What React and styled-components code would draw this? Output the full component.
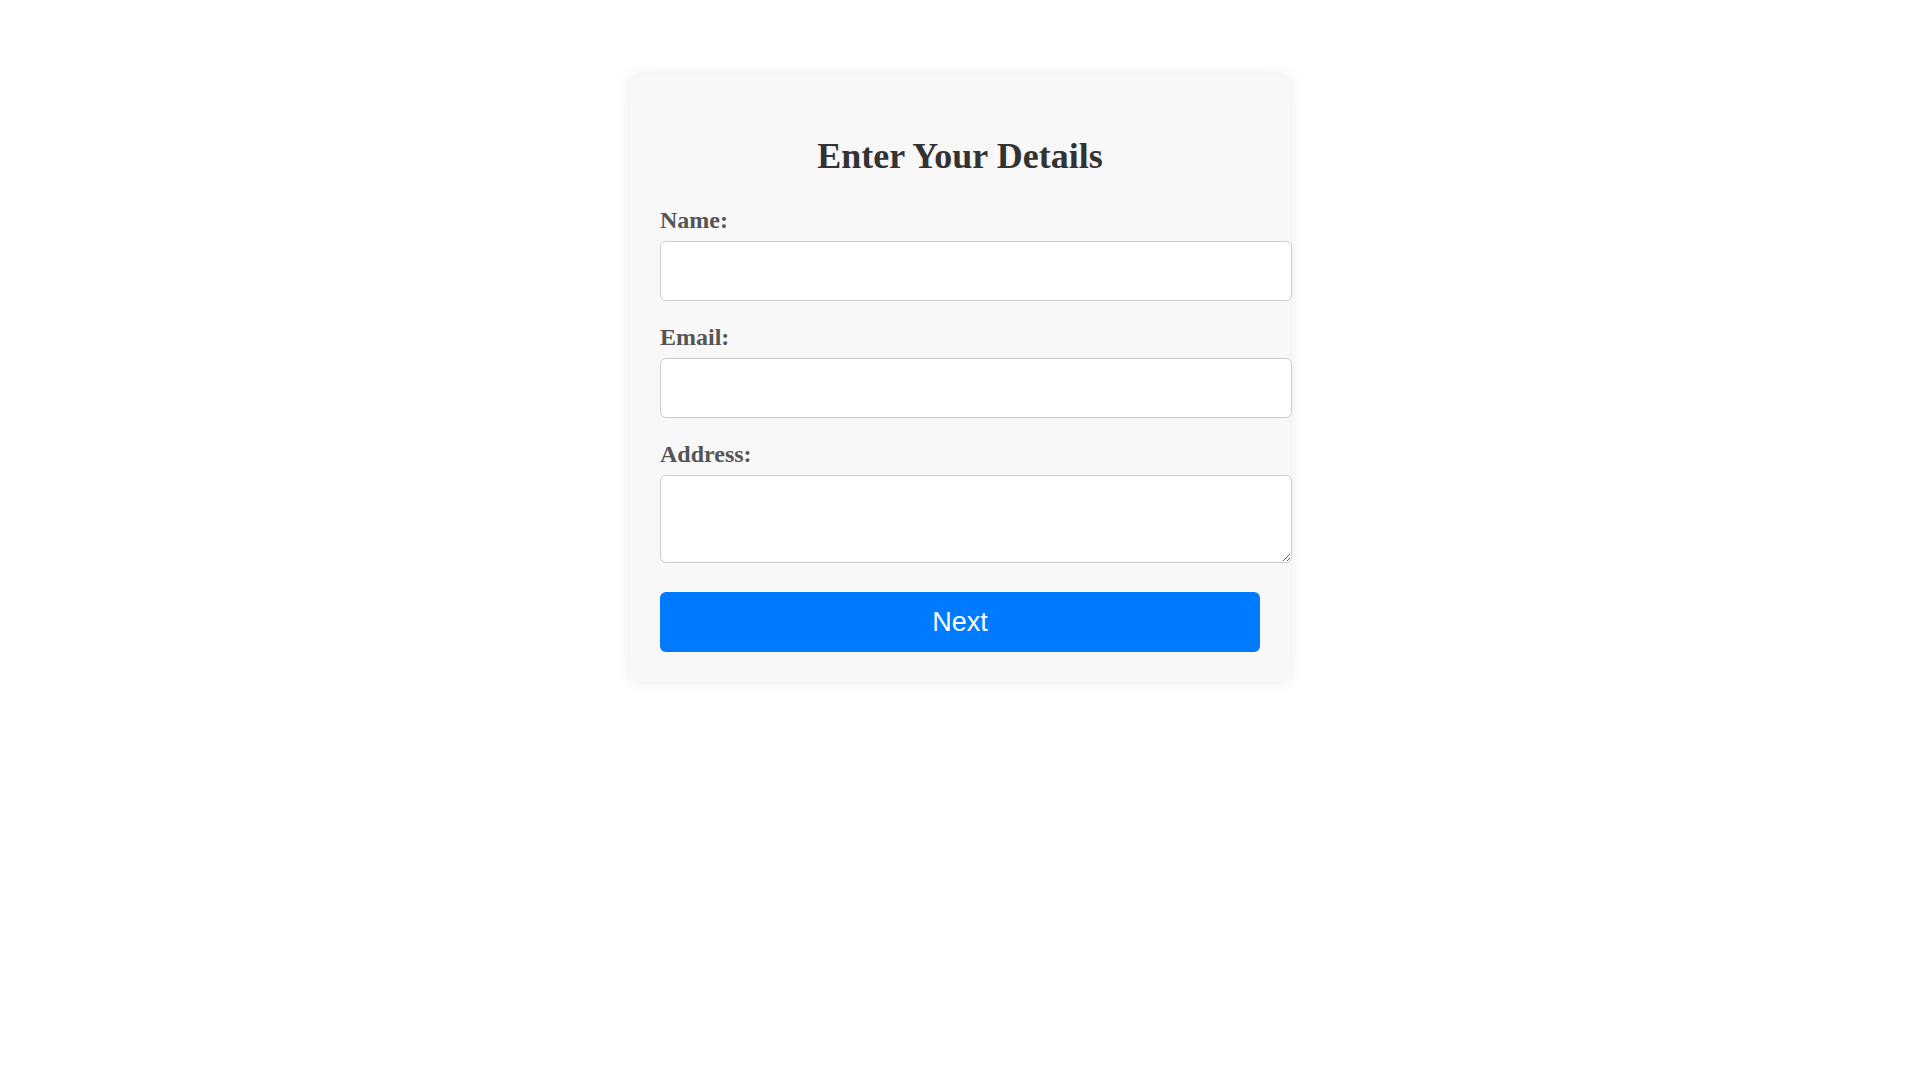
import React from 'react';
import styled, { createGlobalStyle } from 'styled-components';

const GlobalStyle = createGlobalStyle`
    body {
        margin: 0;
        background: #ffffff;
        font-family: "Liberation Serif", "Times New Roman", serif;
    }
`

const Page = styled.div`
    display: flex;
    justify-content: center;
    padding-top: 76px;
    min-height: 1080px;
    box-sizing: border-box;
`

const Card = styled.form`
    width: 600px;
    padding: 30px;
    background-color: #f8f8f8;
    border-radius: 10px;
    box-shadow: 0 0 15px rgba(0, 0, 0, 0.1);
    align-self: flex-start;
`

const Title = styled.h2`
    margin: 30px 0 29px;
    font-size: 36px;
    line-height: 41px;
    font-weight: bold;
    text-align: center;
    color: #333333;
`

const Label = styled.label`
    display: block;
    margin-bottom: 7px;
    font-size: 24px;
    line-height: 28px;
    font-weight: bold;
    color: #555555;
`

const Input = styled.input`
    display: block;
    width: 100%;
    height: 28px;
    padding: 15px;
    margin: 0 0 22px;
    border: 1px solid #cccccc;
    border-radius: 6px;
    background: #ffffff;
    font-size: 24px;
    font-family: "Liberation Serif", serif;
    outline: none;
`

const TextArea = styled.textarea`
    display: block;
    width: 100%;
    height: 56px;
    padding: 15px;
    margin: 0 0 29px;
    border: 1px solid #cccccc;
    border-radius: 6px;
    background: #ffffff;
    font-size: 24px;
    font-family: "Liberation Serif", serif;
    outline: none;
`

const Button = styled.button`
    display: block;
    width: 100%;
    height: 60px;
    border: none;
    border-radius: 6px;
    background-color: #007bff;
    color: #ffffff;
    font-family: "Liberation Sans", Arial, sans-serif;
    font-size: 27px;
    cursor: pointer;
`

export default function App() {
    return (
        <>
            <GlobalStyle />
            <Page>
                <Card onSubmit={e => e.preventDefault()}>
                    <Title>Enter Your Details</Title>
                    <Label htmlFor="name">Name:</Label>
                    <Input id="name" type="text" />
                    <Label htmlFor="email">Email:</Label>
                    <Input id="email" type="email" />
                    <Label htmlFor="address">Address:</Label>
                    <TextArea id="address" />
                    <Button type="submit">Next</Button>
                </Card>
            </Page>
        </>
    );
}
